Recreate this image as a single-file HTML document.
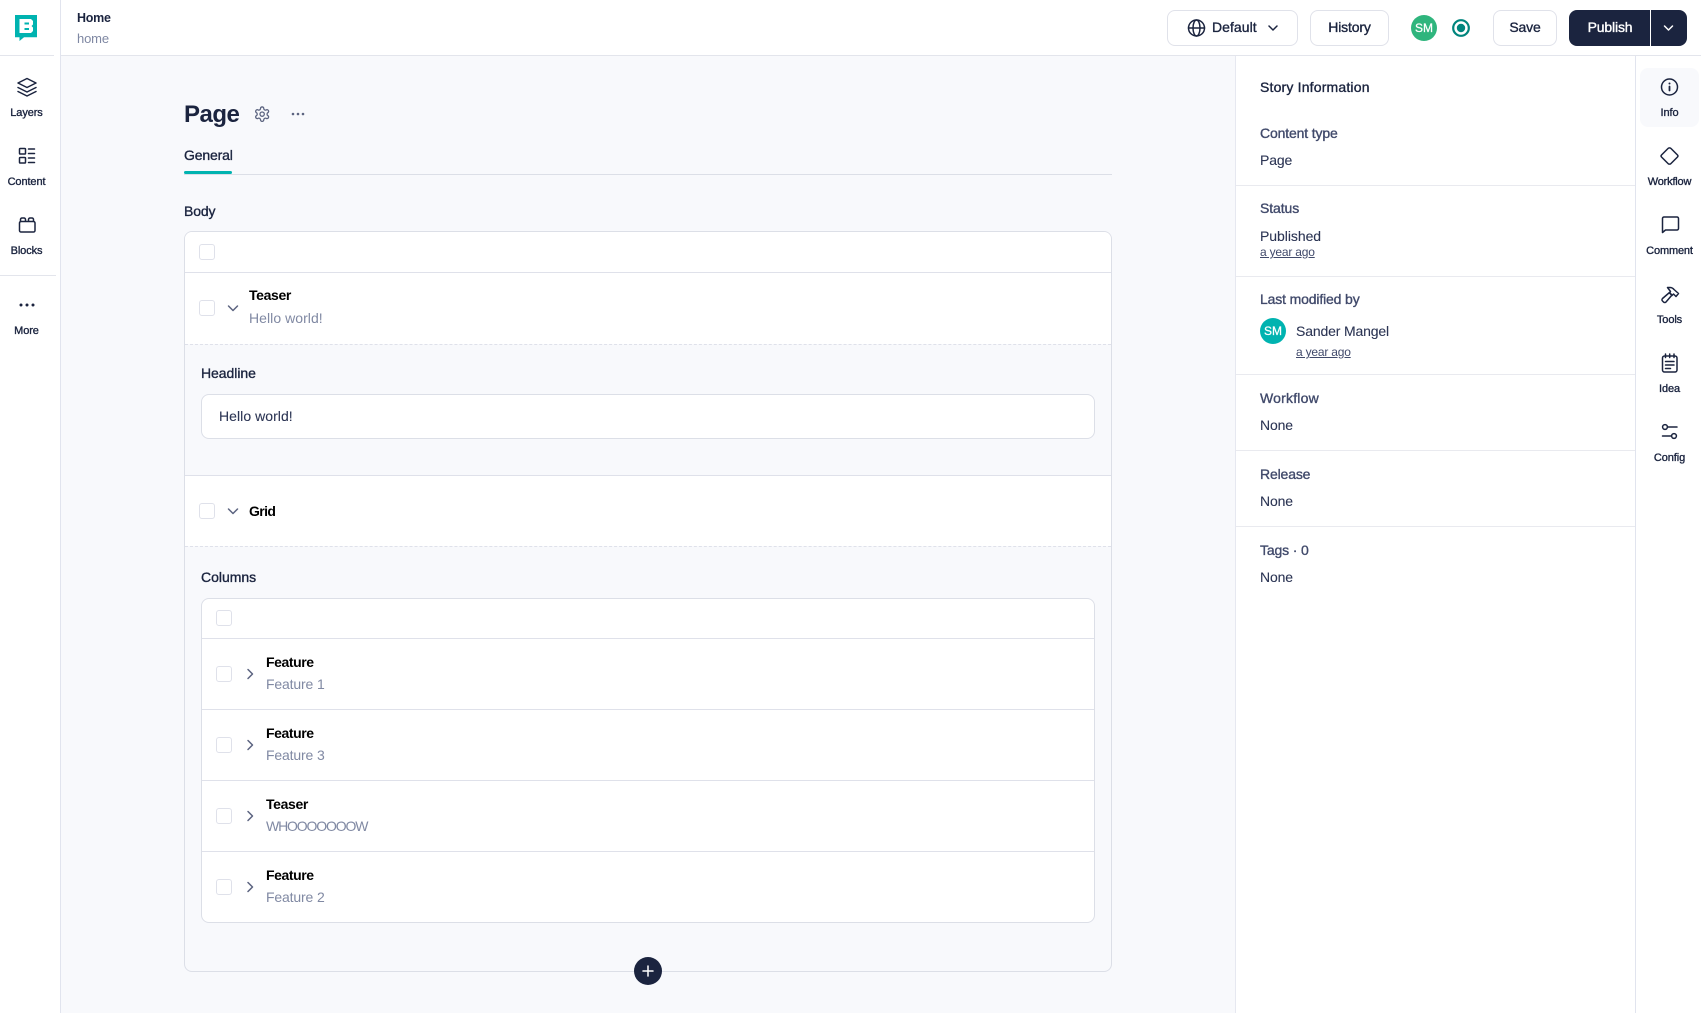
<!DOCTYPE html>
<html><head><meta charset="utf-8"><style>
html,body{margin:0;padding:0;width:1701px;height:1013px;overflow:hidden;background:#fff;font-family:"Liberation Sans",sans-serif;color:#1b243f}
.a{position:absolute;box-sizing:border-box}
.t{position:absolute;line-height:20px;height:20px;white-space:nowrap;font-size:14px;letter-spacing:-.15px}
.m{-webkit-text-stroke:.35px currentColor}
.c{text-align:center;transform:translateX(-50%)}
.s{font-size:11px;letter-spacing:-.1px;-webkit-text-stroke:.35px currentColor;color:#1b243f}
.lb{color:#414a6b}
.v{color:#2c3554;-webkit-text-stroke:.1px currentColor}
.sub{color:#8089a3;letter-spacing:-.05px}
.b{color:#000;font-weight:bold;letter-spacing:-.35px}
.y{font-size:12px;letter-spacing:-.2px;text-decoration:underline;color:#414a6b}
.cb{position:absolute;box-sizing:border-box;width:16px;height:16px;border:1px solid #dfe1ea;border-radius:3px;background:#fff}
.hl{position:absolute;height:1px;background:#dfe1ea}
.btn{position:absolute;box-sizing:border-box;top:10px;height:36px;border:1px solid #e0e2ea;border-radius:8px;background:#fff}
</style></head><body>
<!-- backgrounds -->
<div class="a" style="left:60px;top:55px;width:1176px;height:958px;background:#f8f9fc"></div>
<div class="a" style="left:60px;top:0;width:1px;height:1013px;background:#e1e4ee"></div>
<div class="a" style="left:61px;top:55px;width:1640px;height:1px;background:#e3e5ec"></div>
<div class="a" style="left:0;top:55px;width:54px;height:1px;background:#e3e5ec"></div>
<div class="a" style="left:0;top:275px;width:56px;height:1px;background:#e3e5ec"></div>
<div class="a" style="left:1235px;top:56px;width:1px;height:957px;background:#e6e8f0"></div>
<div class="a" style="left:1635px;top:56px;width:1px;height:957px;background:#e1e4ee"></div>
<div class="a" style="left:1640px;top:68px;width:59px;height:59px;background:#f8f9fc;border-radius:8px"></div>

<!-- left sidebar labels -->
<div class="t s c" style="left:26.5px;top:103px">Layers</div>
<div class="t s c" style="left:26.5px;top:172px">Content</div>
<div class="t s c" style="left:26.5px;top:241px">Blocks</div>
<div class="t s c" style="left:26.5px;top:321px">More</div>

<!-- header -->
<div class="t b" style="left:77px;top:8px;font-size:12.5px;color:#1b243f;letter-spacing:-.25px">Home</div>
<div class="t" style="left:77px;top:29px;font-size:13px;color:#7f88a3">home</div>

<div class="btn" style="left:1167px;width:131px"></div>
<div class="t m" style="left:1212px;top:17px;letter-spacing:.05px">Default</div>
<div class="btn" style="left:1310px;width:79px"></div>
<div class="t m c" style="left:1349.500px;top:17px">History</div>
<div class="a" style="left:1411px;top:15px;width:26px;height:26px;border-radius:50%;background:#2fb57d;color:#fff;font-size:12px;line-height:27px;text-align:center;-webkit-text-stroke:.25px #fff">SM</div>
<div class="btn" style="left:1493px;width:64px"></div>
<div class="t m c" style="left:1525px;top:17px">Save</div>
<div class="a" style="left:1569px;top:10px;width:81px;height:36px;background:#1b243f;border-radius:8px 0 0 8px"></div>
<div class="a" style="left:1651px;top:10px;width:36px;height:36px;background:#1b243f;border-radius:0 8px 8px 0"></div>
<div class="t m c" style="left:1610px;top:17px;color:#fff">Publish</div>

<!-- page title -->
<div class="t" style="left:184px;top:103px;font-size:24px;font-weight:bold;line-height:24px;height:24px;letter-spacing:-.5px">Page</div>
<div class="t m" style="left:184px;top:145px">General</div>
<div class="a" style="left:184px;top:174px;width:928px;height:1px;background:#dcdfe7"></div>
<div class="a" style="left:184px;top:171px;width:48px;height:3px;background:#00b3b0;border-radius:2px"></div>
<div class="t m" style="left:184px;top:201px">Body</div>

<!-- body box -->
<div class="a" style="left:184px;top:231px;width:928px;height:741px;border:1px solid #dcdfe7;border-radius:8px;background:#f8f9fc"></div>
<div class="a" style="left:185px;top:232px;width:926px;height:112px;background:#fff;border-radius:7px 7px 0 0"></div>
<div class="a" style="left:185px;top:475px;width:926px;height:71px;background:#fff"></div>
<div class="hl" style="left:185px;top:272px;width:926px"></div>
<div class="a" style="left:185px;top:344px;width:926px;height:0;border-top:1px dashed #dfe1ea"></div>
<div class="hl" style="left:185px;top:475px;width:926px"></div>
<div class="a" style="left:185px;top:546px;width:926px;height:0;border-top:1px dashed #dfe1ea"></div>
<div class="cb" style="left:199px;top:244px"></div>
<div class="cb" style="left:199px;top:300px"></div>
<div class="t b" style="left:249px;top:285px">Teaser</div>
<div class="t sub" style="left:249px;top:308px;letter-spacing:.05px">Hello world!</div>
<div class="t m" style="left:201px;top:363px;letter-spacing:-.05px">Headline</div>
<div class="a" style="left:201px;top:394px;width:894px;height:45px;background:#fff;border:1px solid #dcdfe7;border-radius:8px"></div>
<div class="t v" style="left:219px;top:406px;letter-spacing:.05px">Hello world!</div>
<div class="cb" style="left:199px;top:503px"></div>
<div class="t b" style="left:249px;top:501px;letter-spacing:-.6px">Grid</div>
<div class="t m" style="left:201px;top:567px;letter-spacing:-.02px">Columns</div>

<!-- columns box -->
<div class="a" style="left:201px;top:598px;width:894px;height:325px;background:#fff;border:1px solid #dcdfe7;border-radius:8px"></div>
<div class="hl" style="left:202px;top:638px;width:892px"></div>
<div class="hl" style="left:202px;top:709px;width:892px"></div>
<div class="hl" style="left:202px;top:780px;width:892px"></div>
<div class="hl" style="left:202px;top:851px;width:892px"></div>
<div class="cb" style="left:216px;top:610px"></div>
<div class="cb" style="left:216px;top:666px"></div>
<div class="cb" style="left:216px;top:737px"></div>
<div class="cb" style="left:216px;top:808px"></div>
<div class="cb" style="left:216px;top:879px"></div>
<div class="t b" style="left:266px;top:652px;letter-spacing:-.42px">Feature</div><div class="t sub" style="left:266px;top:674px;letter-spacing:-.15px">Feature 1</div>
<div class="t b" style="left:266px;top:723px;letter-spacing:-.42px">Feature</div><div class="t sub" style="left:266px;top:745px;letter-spacing:-.15px">Feature 3</div>
<div class="t b" style="left:266px;top:794px">Teaser</div><div class="t sub" style="left:266px;top:816px;letter-spacing:-1.15px">WHOOOOOOOW</div>
<div class="t b" style="left:266px;top:865px;letter-spacing:-.42px">Feature</div><div class="t sub" style="left:266px;top:887px;letter-spacing:-.15px">Feature 2</div>
<div class="a" style="left:634px;top:957px;width:28px;height:28px;border-radius:50%;background:#1b243f"></div>

<!-- right panel -->
<div class="t m" style="left:1260px;top:77px;letter-spacing:.18px">Story Information</div>
<div class="t m lb" style="left:1260px;top:123px">Content type</div>
<div class="t v" style="left:1260px;top:150px">Page</div>
<div class="hl" style="left:1236px;top:185px;width:399px;background:#e9eaef"></div>
<div class="t m lb" style="left:1260px;top:198px;letter-spacing:-.1px">Status</div>
<div class="t v" style="left:1260px;top:226px;letter-spacing:-.05px">Published</div>
<div class="t y" style="left:1260px;top:242px">a year ago</div>
<div class="hl" style="left:1236px;top:276px;width:399px;background:#e9eaef"></div>
<div class="t m lb" style="left:1260px;top:289px">Last modified by</div>
<div class="a" style="left:1260px;top:318px;width:26px;height:26px;border-radius:50%;background:#00b3b0;color:#fff;font-size:12px;line-height:27px;text-align:center;-webkit-text-stroke:.25px #fff">SM</div>
<div class="t v" style="left:1296px;top:321px">Sander Mangel</div>
<div class="t y" style="left:1296px;top:342px">a year ago</div>
<div class="hl" style="left:1236px;top:374px;width:399px;background:#e9eaef"></div>
<div class="t m lb" style="left:1260px;top:388px;letter-spacing:.2px">Workflow</div>
<div class="t v" style="left:1260px;top:415px">None</div>
<div class="hl" style="left:1236px;top:450px;width:399px;background:#e9eaef"></div>
<div class="t m lb" style="left:1260px;top:464px">Release</div>
<div class="t v" style="left:1260px;top:491px">None</div>
<div class="hl" style="left:1236px;top:526px;width:399px;background:#e9eaef"></div>
<div class="t m lb" style="left:1260px;top:540px">Tags · 0</div>
<div class="t v" style="left:1260px;top:567px">None</div>

<!-- right rail labels -->
<div class="t s c" style="left:1669.500px;top:103px">Info</div>
<div class="t s c" style="left:1669.500px;top:172px;letter-spacing:-.2px">Workflow</div>
<div class="t s c" style="left:1669.500px;top:241px;letter-spacing:-.15px">Comment</div>
<div class="t s c" style="left:1669.500px;top:310px">Tools</div>
<div class="t s c" style="left:1669.500px;top:379px">Idea</div>
<div class="t s c" style="left:1669.500px;top:448px">Config</div>

<!-- icons -->
<svg class="a" style="left:0;top:0" width="1701" height="1013" viewBox="0 0 1701 1013" fill="none" stroke="#1b243f" stroke-width="1.5" stroke-linecap="round" stroke-linejoin="round">
<!-- logo -->
<path d="M15 15h22v22.300H24l-4.500 3.700v-3.700H15z" fill="#00b3b0" stroke="none"/>
<path d="M19.500 19h11.500l2 2v3.500l-1.500 1.500 1.500 1.500v3.500l-2 2H19.500zM24.500 22.500v2h4.500v-2zM24.500 28v2h4.500v-2z" fill="#fff" fill-rule="evenodd" stroke="none"/>
<!-- layers -->
<path d="M27 78.500l9 4.500-9 4.500-9-4.500z"/><path d="M18 87.500l9 4.500 9-4.500"/><path d="M18 91.500l9 4.500 9-4.500"/>
<!-- content -->
<rect x="19.500" y="148.500" width="6" height="5.500" rx=".8"/><rect x="19.500" y="157.500" width="6" height="5.500" rx=".8"/>
<path d="M28.500 149h6M28.500 153.500h6M28.500 158h6M28.500 162.500h6"/>
<!-- blocks -->
<rect x="19.500" y="221.500" width="15.500" height="10.500" rx="1.500"/>
<path d="M20.500 221v-1.500a1.500 1.500 0 0 1 1.500-1.500h2a1.500 1.500 0 0 1 1.500 1.500V221M28.500 221v-1.500a1.500 1.500 0 0 1 1.500-1.500h2a1.500 1.500 0 0 1 1.500 1.500V221"/>
<!-- more -->
<g fill="#1b243f" stroke="none"><circle cx="21" cy="305" r="1.500"/><circle cx="27" cy="305" r="1.500"/><circle cx="33" cy="305" r="1.500"/></g>
<!-- gear -->
<g transform="translate(253.500 105.500) scale(.72)" stroke="#5c6480" stroke-width="1.800"><path d="M12.220 2h-.44a2 2 0 0 0-2 2v.18a2 2 0 0 1-1 1.730l-.43.25a2 2 0 0 1-2 0l-.15-.08a2 2 0 0 0-2.730.73l-.22.38a2 2 0 0 0 .73 2.730l.15.1a2 2 0 0 1 1 1.720v.51a2 2 0 0 1-1 1.740l-.15.09a2 2 0 0 0-.73 2.730l.22.38a2 2 0 0 0 2.730.73l.15-.08a2 2 0 0 1 2 0l.43.25a2 2 0 0 1 1 1.730V20a2 2 0 0 0 2 2h.44a2 2 0 0 0 2-2v-.18a2 2 0 0 1 1-1.730l.43-.25a2 2 0 0 1 2 0l.15.08a2 2 0 0 0 2.730-.73l.22-.39a2 2 0 0 0-.73-2.730l-.15-.08a2 2 0 0 1-1-1.740v-.5a2 2 0 0 1 1-1.740l.15-.09a2 2 0 0 0 .73-2.730l-.22-.38a2 2 0 0 0-2.730-.73l-.15.08a2 2 0 0 1-2 0l-.43-.25a2 2 0 0 1-1-1.730V4a2 2 0 0 0-2-2z"/><circle cx="12" cy="12" r="3"/></g>
<g fill="#5c6480" stroke="none"><circle cx="293" cy="114" r="1.300"/><circle cx="298" cy="114" r="1.300"/><circle cx="303" cy="114" r="1.300"/></g>
<!-- chevrons -->
<g stroke="#5c6480" stroke-width="1.500">
<path d="M228.500 306l4.500 4.500 4.500-4.500"/><path d="M228.500 509l4.500 4.500 4.500-4.500"/>
<path d="M248 669.500l4.500 4.500-4.500 4.500"/><path d="M248 740.500l4.500 4.500-4.500 4.500"/><path d="M248 811.500l4.500 4.500-4.500 4.500"/><path d="M248 882.500l4.500 4.500-4.500 4.500"/>
</g>
<!-- globe -->
<circle cx="1196.500" cy="28" r="8"/><ellipse cx="1196.500" cy="28" rx="3.500" ry="8"/><path d="M1188.500 28h16"/>
<path d="M1269 26l4 4 4-4"/>
<!-- radio -->
<circle cx="1461" cy="28" r="7.800" stroke="#00857d" stroke-width="2.200"/><circle cx="1461" cy="28" r="4.200" fill="#00857d" stroke="none"/>
<!-- publish chevron -->
<path d="M1664.500 26l4 4 4-4" stroke="#fff"/>
<!-- add -->
<path d="M648 966v10M643 971h10" stroke="#fff" stroke-width="1.500"/>
<!-- info -->
<circle cx="1669.500" cy="87" r="8"/><path d="M1669.500 86.500v4" stroke-width="1.800"/><circle cx="1669.500" cy="83.500" r="1" fill="#1b243f" stroke="none"/>
<!-- workflow -->
<path d="M1668 148.500a2 2 0 0 1 3 0l6.500 6.500a1.500 1.500 0 0 1 0 2l-6.500 6.500a2 2 0 0 1-3 0l-6.500-6.500a1.500 1.500 0 0 1 0-2z"/>
<!-- comment -->
<path d="M1662.500 232.500v-14a1.500 1.500 0 0 1 1.500-1.500h13a1.500 1.500 0 0 1 1.500 1.500v10a1.500 1.500 0 0 1-1.500 1.500h-11.500z"/>
<!-- tools -->
<path d="M1662.500 298.500l7-6 2.500 2.500-6 7a1.700 1.700 0 0 1-2.500 0l-1-1a1.700 1.700 0 0 1 0-2.500z"/><path d="M1667.500 287.500h2.500c2 0 3 .8 4 2l4.500 4-2.500 3-2.500-2.500-1.500 1.500-2.500-2.500 1-1.500z"/>
<!-- idea -->
<rect x="1662.500" y="356" width="14.500" height="16" rx="2"/><path d="M1665.500 354v3.500M1669.700 354v3.500M1674 354v3.500"/><path d="M1665.500 361.500h8.500M1665.500 365h8.500M1665.500 368.500h5"/>
<!-- config -->
<circle cx="1665" cy="427" r="2.400"/><path d="M1667.500 427h9.500"/><circle cx="1674" cy="436" r="2.400"/><path d="M1662.500 436h9"/>
</svg>
</body></html>
